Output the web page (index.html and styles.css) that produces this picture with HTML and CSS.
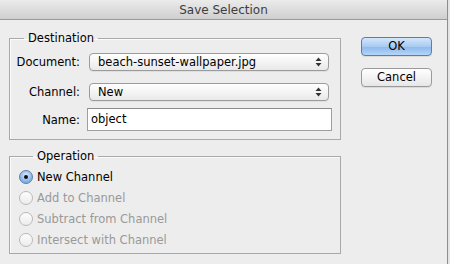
FILE: index.html
```html
<!DOCTYPE html>
<html>
<head>
<meta charset="utf-8">
<link rel="stylesheet" href="styles.css">
</head>
<body>
<div class="window">
  <div class="titlebar">Save Selection</div>
  <div class="content">
    <div class="groups">
      <fieldset class="group dest">
        <legend>Destination</legend>
        <div class="form">
          <span class="lbl">Document:</span>
          <div class="select"><span>beach-sunset-wallpaper.jpg</span><svg class="arrows" width="7" height="10" viewBox="0 0 7 10"><path d="M3.5 0.5 L6.5 4 L0.5 4 Z M0.5 6 L6.5 6 L3.5 9.5 Z" fill="#333"/></svg></div>
          <span class="lbl row2">Channel:</span>
          <div class="select row2"><span>New</span><svg class="arrows" width="7" height="10" viewBox="0 0 7 10"><path d="M3.5 0.5 L6.5 4 L0.5 4 Z M0.5 6 L6.5 6 L3.5 9.5 Z" fill="#333"/></svg></div>
          <span class="lbl row3">Name:</span>
          <div class="input row3">object</div>
        </div>
      </fieldset>
      <fieldset class="group op">
        <legend>Operation</legend>
        <div class="radios">
          <div class="radio-row"><span class="radio on"></span><span>New Channel</span></div>
          <div class="radio-row disabled"><span class="radio"></span><span>Add to Channel</span></div>
          <div class="radio-row disabled"><span class="radio"></span><span>Subtract from Channel</span></div>
          <div class="radio-row disabled"><span class="radio"></span><span>Intersect with Channel</span></div>
        </div>
      </fieldset>
    </div>
    <div class="buttons">
      <div class="btn default">OK</div>
      <div class="btn">Cancel</div>
    </div>
  </div>
</div>
</body>
</html>
```

FILE: styles.css
```css
* { box-sizing: border-box; }
html, body { margin: 0; padding: 0; }
body {
  background: #e4e4e4;
  font-family: "DejaVu Sans", sans-serif;
  font-size: 11.5px;
  color: #000;
  width: 450px;
  height: 264px;
  overflow: hidden;
}
.window {
  width: 448px;
  height: 264px;
  background: #ededed;
  border-right: 1px solid #8e8e8e;
}
.titlebar {
  height: 20px;
  line-height: 20px;
  text-align: center;
  color: #3d3d3d;
  font-size: 12px;
  background: linear-gradient(#ebebeb, #cfcfcf);
  border-bottom: 1px solid #9a9a9a;
}
.content {
  display: flex;
  padding-left: 9px;
}
.groups {
  width: 332px;
  display: flex;
  flex-direction: column;
}
.group {
  margin: 0;
  border: 1px solid #a9a9a9;
  box-shadow: inset 1px 1px 0 #fbfbfb;
  padding: 0;
}
.group legend {
  margin-left: 14px;
  padding: 0 4px;
  line-height: 14px;
  color: #000;
}
.dest {
  margin-top: 11px;
  height: 109px;
  padding: 8px 8px 0 0;
}
.form {
  display: grid;
  grid-template-columns: 70px 1fr;
  column-gap: 7px;
  row-gap: 0;
  align-items: center;
}
.lbl {
  text-align: right;
}
.select {
  height: 18px;
  margin: 0 3px 0 2px;
  border: 1px solid #9b9b9b;
  border-radius: 4px;
  background: linear-gradient(#ffffff, #f4f4f4 50%, #e9e9e9);
  box-shadow: 0 1px 0 rgba(0,0,0,0.06);
  display: flex;
  align-items: center;
  justify-content: space-between;
  padding: 0 6px 0 8px;
  line-height: 16px;
}
.row2 { margin-top: 12px; }
.select.row2 { margin-top: 12px; }
.row3 { margin-top: 7px; }
.arrows { display: block; }
.input {
  height: 23px;
  border: 1px solid #9e9e9e;
  border-top-color: #8a8a8a;
  background: #fff;
  padding: 0 3px;
  line-height: 21px;
}
.op {
  margin-top: 9px;
  height: 105px;
  padding: 3px 0 0 9px;
}
.radios {
  display: flex;
  flex-direction: column;
}
.radio-row {
  height: 21px;
  display: flex;
  align-items: center;
  gap: 4px;
}
.radio-row.disabled { color: #999; }
.radio {
  width: 14px;
  height: 14px;
  border-radius: 50%;
  border: 1px solid #b9b9b9;
  background: linear-gradient(#fdfdfd, #ececec);
  display: flex;
  align-items: center;
  justify-content: center;
}
.radio.on {
  border-color: #5b7fae;
  background: radial-gradient(circle at 50% 35%, #dcebfb, #8cb7ea 60%, #6a9de0);
}
.radio.on::after {
  content: "";
  width: 4px;
  height: 4px;
  border-radius: 50%;
  background: #111;
}
.buttons {
  margin-left: 20px;
  padding-top: 17px;
  display: flex;
  flex-direction: column;
  gap: 12px;
  width: 71px;
}
.btn {
  height: 19px;
  border: 1px solid #9a9a9a;
  border-radius: 4px;
  background: linear-gradient(#ffffff, #f3f3f3 50%, #e6e6e6);
  text-align: center;
  line-height: 17px;
  box-shadow: 0 1px 0 rgba(0,0,0,0.08);
}
.btn.default {
  border-color: #5a7cae;
  background: linear-gradient(#d4e6fb, #a8cbf3 50%, #8bb8ee 51%, #b5d5f7);
}
```
